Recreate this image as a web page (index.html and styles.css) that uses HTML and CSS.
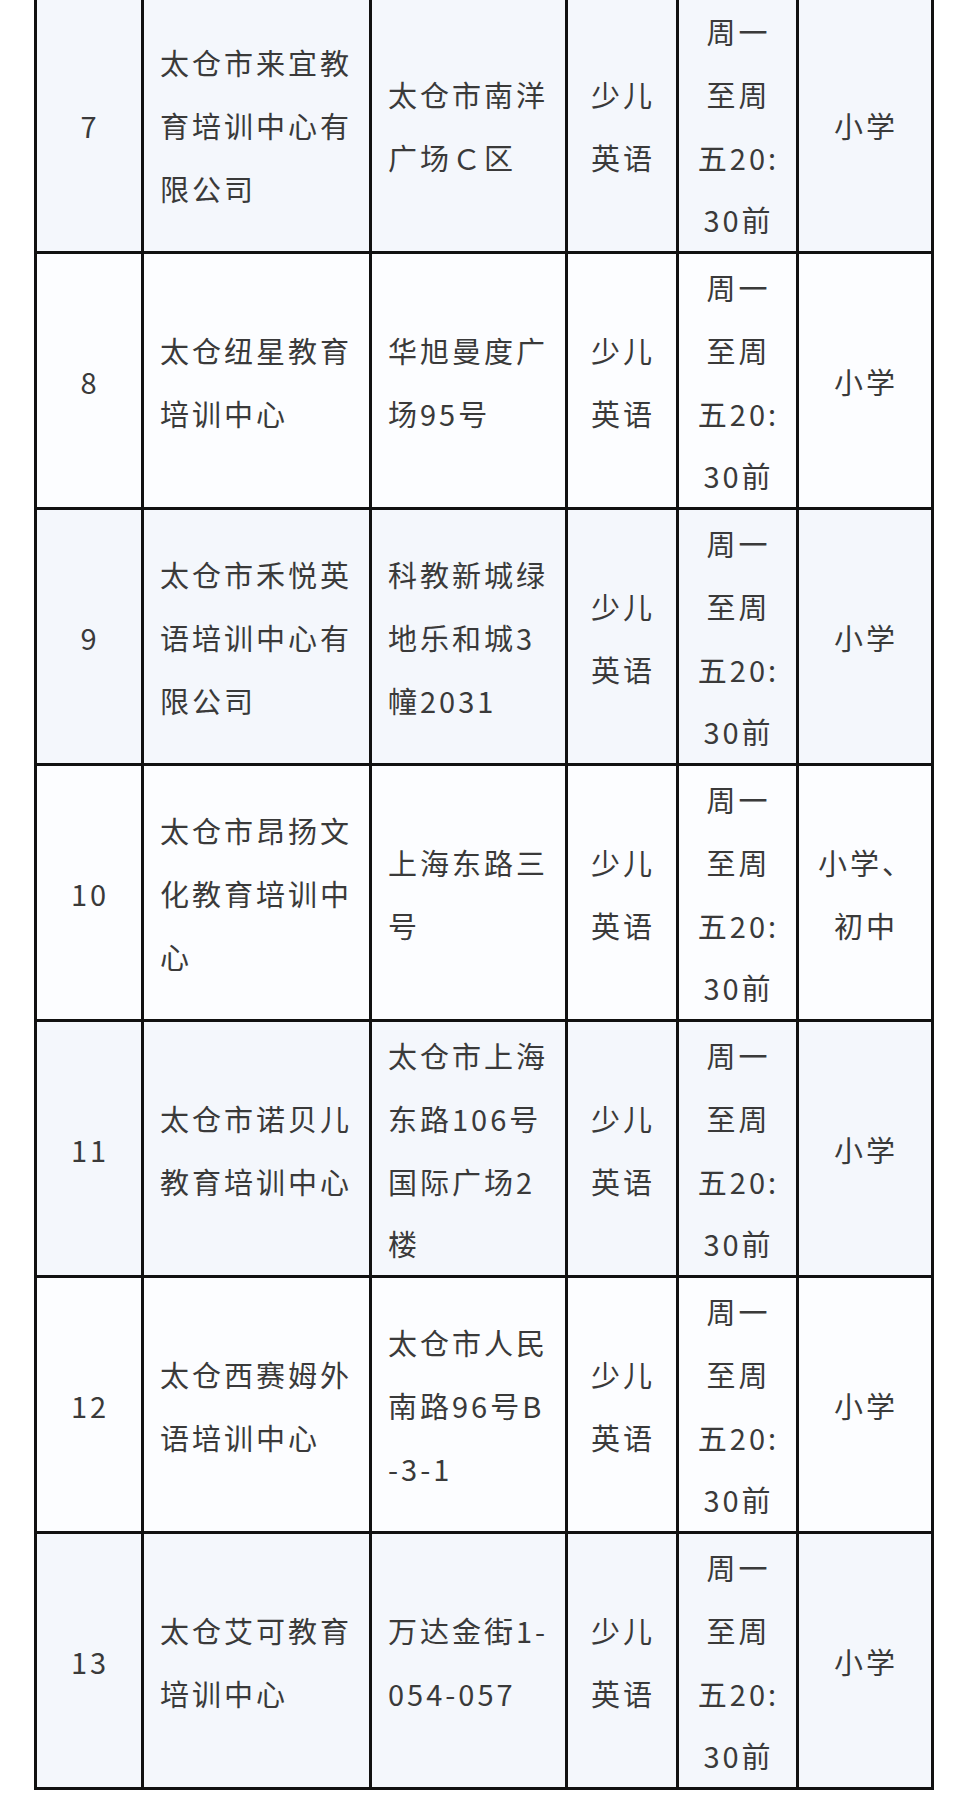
FILE: index.html
```html
<!DOCTYPE html>
<html lang="zh-CN">
<head>
<meta charset="utf-8">
<title>培训机构</title>
<link rel="stylesheet" href="styles.css">
</head>
<body>
<table class="grid">
  <colgroup>
    <col class="c-no"><col class="c-name"><col class="c-addr"><col class="c-subj"><col class="c-time"><col class="c-grade">
  </colgroup>
  <tbody>
    <tr class="odd">
      <td class="ctr">7</td>
      <td class="lft">太仓市来宜教<br>育培训中心有<br>限公司</td>
      <td class="lft">太仓市南洋<br>广场Ｃ区</td>
      <td class="ctr">少儿<br>英语</td>
      <td class="ctr">周一<br>至周<br>五20:<br>30前</td>
      <td class="ctr">小学</td>
    </tr>
    <tr class="even">
      <td class="ctr">8</td>
      <td class="lft">太仓纽星教育<br>培训中心</td>
      <td class="lft">华旭曼度广<br>场95号</td>
      <td class="ctr">少儿<br>英语</td>
      <td class="ctr">周一<br>至周<br>五20:<br>30前</td>
      <td class="ctr">小学</td>
    </tr>
    <tr class="odd">
      <td class="ctr">9</td>
      <td class="lft">太仓市禾悦英<br>语培训中心有<br>限公司</td>
      <td class="lft">科教新城绿<br>地乐和城3<br>幢2031</td>
      <td class="ctr">少儿<br>英语</td>
      <td class="ctr">周一<br>至周<br>五20:<br>30前</td>
      <td class="ctr">小学</td>
    </tr>
    <tr class="even">
      <td class="ctr">10</td>
      <td class="lft">太仓市昂扬文<br>化教育培训中<br>心</td>
      <td class="lft">上海东路三<br>号</td>
      <td class="ctr">少儿<br>英语</td>
      <td class="ctr">周一<br>至周<br>五20:<br>30前</td>
      <td class="ctr">小学、<br>初中</td>
    </tr>
    <tr class="odd">
      <td class="ctr">11</td>
      <td class="lft">太仓市诺贝儿<br>教育培训中心</td>
      <td class="lft">太仓市上海<br>东路106号<br>国际广场2<br>楼</td>
      <td class="ctr">少儿<br>英语</td>
      <td class="ctr">周一<br>至周<br>五20:<br>30前</td>
      <td class="ctr">小学</td>
    </tr>
    <tr class="even">
      <td class="ctr">12</td>
      <td class="lft">太仓西赛姆外<br>语培训中心</td>
      <td class="lft">太仓市人民<br>南路96号B<br>-3-1</td>
      <td class="ctr">少儿<br>英语</td>
      <td class="ctr">周一<br>至周<br>五20:<br>30前</td>
      <td class="ctr">小学</td>
    </tr>
    <tr class="odd">
      <td class="ctr">13</td>
      <td class="lft">太仓艾可教育<br>培训中心</td>
      <td class="lft">万达金街1-<br>054-057</td>
      <td class="ctr">少儿<br>英语</td>
      <td class="ctr">周一<br>至周<br>五20:<br>30前</td>
      <td class="ctr">小学</td>
    </tr>
  </tbody>
</table>
</body>
</html>
```

FILE: styles.css
```css
html, body {
  margin: 0;
  padding: 0;
  background: #ffffff;
}

body {
  font-family: "Noto Sans CJK SC", "Noto Sans", sans-serif;
  color: #3a3a3a;
}

.grid {
  margin: -5px 0 0 34px;
  width: 900px;
  table-layout: fixed;
  border-collapse: collapse;
}

.c-no { width: 107px; }
.c-name { width: 228px; }
.c-addr { width: 196px; }
.c-subj { width: 111px; }
.c-time { width: 120px; }
.c-grade { width: 135px; }

.grid td {
  border: 3px solid #111111;
  padding: 2px 14px 0 16px;
  font-size: 29px;
  line-height: 62.75px;
  letter-spacing: 3px;
  white-space: nowrap;
  vertical-align: middle;
  height: 253px;
  box-sizing: border-box;
}

.grid td.ctr {
  text-align: center;
  padding: 2px 2px 0 4px;
}

.grid td.lft {
  text-align: left;
}

.odd td { background: #f4f7fc; }
.even td { background: #fcfdff; }
```
